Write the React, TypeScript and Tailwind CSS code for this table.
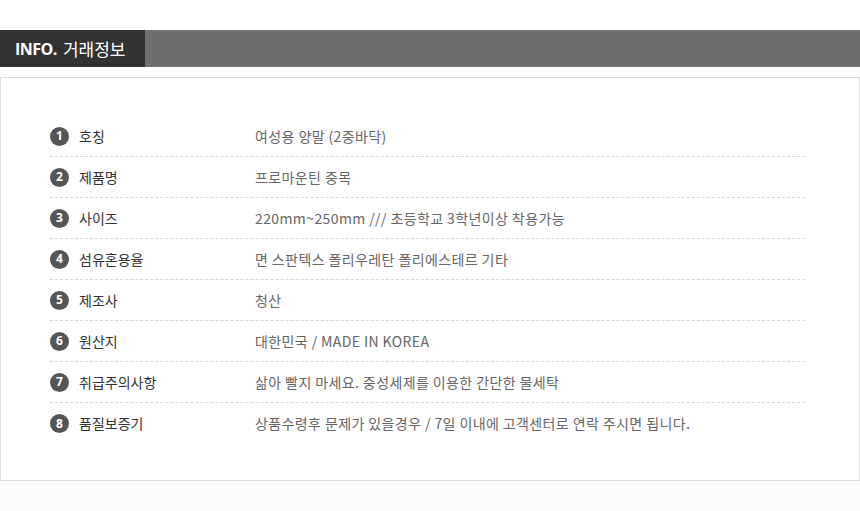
import React from "react";

const rows: [string, string][] = [
  ["호칭", "여성용 양말 (2중바닥)"],
  ["제품명", "프로마운틴 중목"],
  ["사이즈", "220mm~250mm /// 초등학교 3학년이상 착용가능"],
  ["섬유혼용율", "면 스판텍스 폴리우레탄 폴리에스테르 기타"],
  ["제조사", "청산"],
  ["원산지", "대한민국 / MADE IN KOREA"],
  ["취급주의사항", "삶아 빨지 마세요. 중성세제를 이용한 간단한 물세탁"],
  ["품질보증기", "상품수령후 문제가 있을경우 / 7일 이내에 고객센터로 연락 주시면 됩니다."],
];

export default function App() {
  return (
    <div
      className="w-[860px] h-[511px] bg-[#fbfbfb] flex flex-col"
      style={{ fontFamily: '"Noto Sans CJK KR", "Noto Sans", sans-serif' }}
    >
      <div className="bg-white h-[30px]" />
      <div className="flex h-[37px] bg-[#6f6f6f]">
        <div className="w-[145px] bg-[#333333] flex items-center pl-[15px] text-white leading-none">
          <span className="font-bold text-[16px] tracking-[-0.5px]" style={{ fontFamily: '"Open Sans", "Noto Sans", sans-serif' }}>INFO.</span>
          <span className="ml-[6px] text-[17px]">거래정보</span>
        </div>
      </div>
      <div className="bg-white h-[10px]" />
      <div className="bg-white w-[860px] h-[404px] border border-[#dddddd] pt-[38px] pl-[49px]">
        <div className="w-[755px] flex flex-col">
          {rows.map(([k, v], i) => (
            <div
              key={i}
              className={`h-[41px] flex items-center ${i < rows.length - 1 ? "border-b border-dashed border-[#d8d8d8]" : ""}`}
            >
              <div className="w-[19px] h-[19px] rounded-full bg-[#555555] text-white text-[12px] font-bold flex items-center justify-center leading-none" style={{ fontFamily: '"Open Sans", sans-serif' }}>
                {i + 1}
              </div>
              <div className="w-[186px] pl-[10px] text-[14px] text-[#333333]">{k}</div>
              <div className="text-[14px] tracking-[0.4px] text-[#666666]">{v}</div>
            </div>
          ))}
        </div>
      </div>
    </div>
  );
}
